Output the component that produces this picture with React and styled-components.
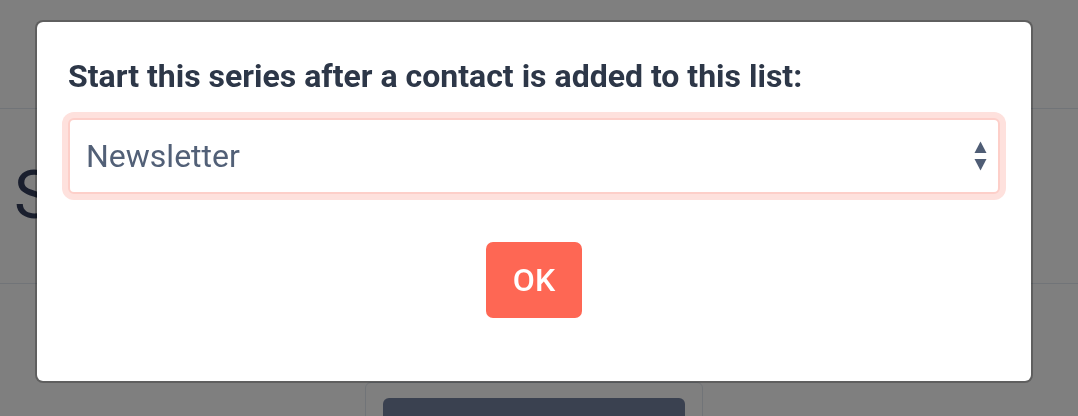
import React from "react";
import styled, { createGlobalStyle } from "styled-components";

const Global = createGlobalStyle`
  html, body { margin: 0; padding: 0; background: #ffffff; }
  body { font-family: Roboto, "Liberation Sans", sans-serif; overflow: hidden; }
  * { box-sizing: border-box; }
`;

const Page = styled.div`
  width: 1078px;
  height: 416px;
  overflow: hidden;
  background: #ffffff;
`;

const Header = styled.header`
  height: 109px;
  border-bottom: 1px solid #e2e8f0;
`;

const TitleBar = styled.section`
  height: 175px;
  border-bottom: 1px solid #e2e8f0;
  display: flex;
  align-items: center;
  padding-left: 14px;
`;

const PageHeading = styled.h1`
  margin: 0;
  font-size: 66px;
  font-weight: 400;
  line-height: 1;
  color: #343e5c;
`;

const CardArea = styled.div`
  display: flex;
  justify-content: center;
  padding: 98px 10px 0 0;
`;

const Card = styled.div`
  width: 338px;
  border: 1px solid #e2e8f0;
  border-radius: 6px;
  padding: 15px 17px;
`;

const CardButton = styled.div`
  height: 48px;
  border-radius: 6px;
  background: #7482a0;
`;

const Overlay = styled.div`
  position: fixed;
  inset: 0;
  background: rgba(0, 0, 0, 0.5);
  display: flex;
  align-items: flex-start;
  padding: 20px 45px 0 35px;
`;

const Modal = styled.div`
  width: 100%;
  background: #ffffff;
  background-clip: padding-box;
  border: 2px solid rgba(0, 0, 0, 0.25);
  border-radius: 8px;
  padding: 32px 31px 63px;
`;

const Title = styled.h2`
  margin: 0 0 19px;
  font-size: 32px;
  font-weight: 700;
  line-height: 45px;
  color: #2d3748;
`;

const SelectWrap = styled.div`
  position: relative;
`;

const Select = styled.select`
  display: block;
  width: 100%;
  height: 76px;
  appearance: none;
  -webkit-appearance: none;
  background: #ffffff;
  border: 2px solid #fdcfc9;
  border-radius: 6px;
  box-shadow: 0 0 0 6px #fee1dd;
  outline: none;
  padding: 0 40px 0 16px;
  font-family: Roboto, "Liberation Sans", sans-serif;
  font-size: 32px;
  font-weight: 400;
  color: #526077;
`;

const Arrows = styled.svg`
  position: absolute;
  right: 13px;
  top: 23px;
  width: 13px;
  height: 30px;
  pointer-events: none;
`;

const Footer = styled.div`
  display: flex;
  justify-content: center;
  margin-top: 48px;
`;

const OkButton = styled.button`
  width: 96px;
  height: 76px;
  border: none;
  border-radius: 7px;
  background: #fe6754;
  color: #ffffff;
  font-family: Roboto, "Liberation Sans", sans-serif;
  font-size: 32px;
  font-weight: 500;
  display: flex;
  align-items: center;
  justify-content: center;
  padding: 0;
`;

export default function App() {
  return (
    <>
      <Global />
      <Page>
        <Header />
        <TitleBar>
          <PageHeading>Series</PageHeading>
        </TitleBar>
        <CardArea>
          <Card>
            <CardButton />
          </Card>
        </CardArea>
      </Page>
      <Overlay>
        <Modal>
          <Title>Start this series after a contact is added to this list:</Title>
          <SelectWrap>
            <Select defaultValue="newsletter">
              <option value="newsletter">Newsletter</option>
            </Select>
            <Arrows viewBox="0 0 13 30" aria-hidden="true">
              <path d="M0.5 12 L6.5 0.5 L12.5 12 Z" fill="#4f5d75" />
              <path d="M0.5 18 L12.5 18 L6.5 29.5 Z" fill="#4f5d75" />
            </Arrows>
          </SelectWrap>
          <Footer>
            <OkButton>OK</OkButton>
          </Footer>
        </Modal>
      </Overlay>
    </>
  );
}
